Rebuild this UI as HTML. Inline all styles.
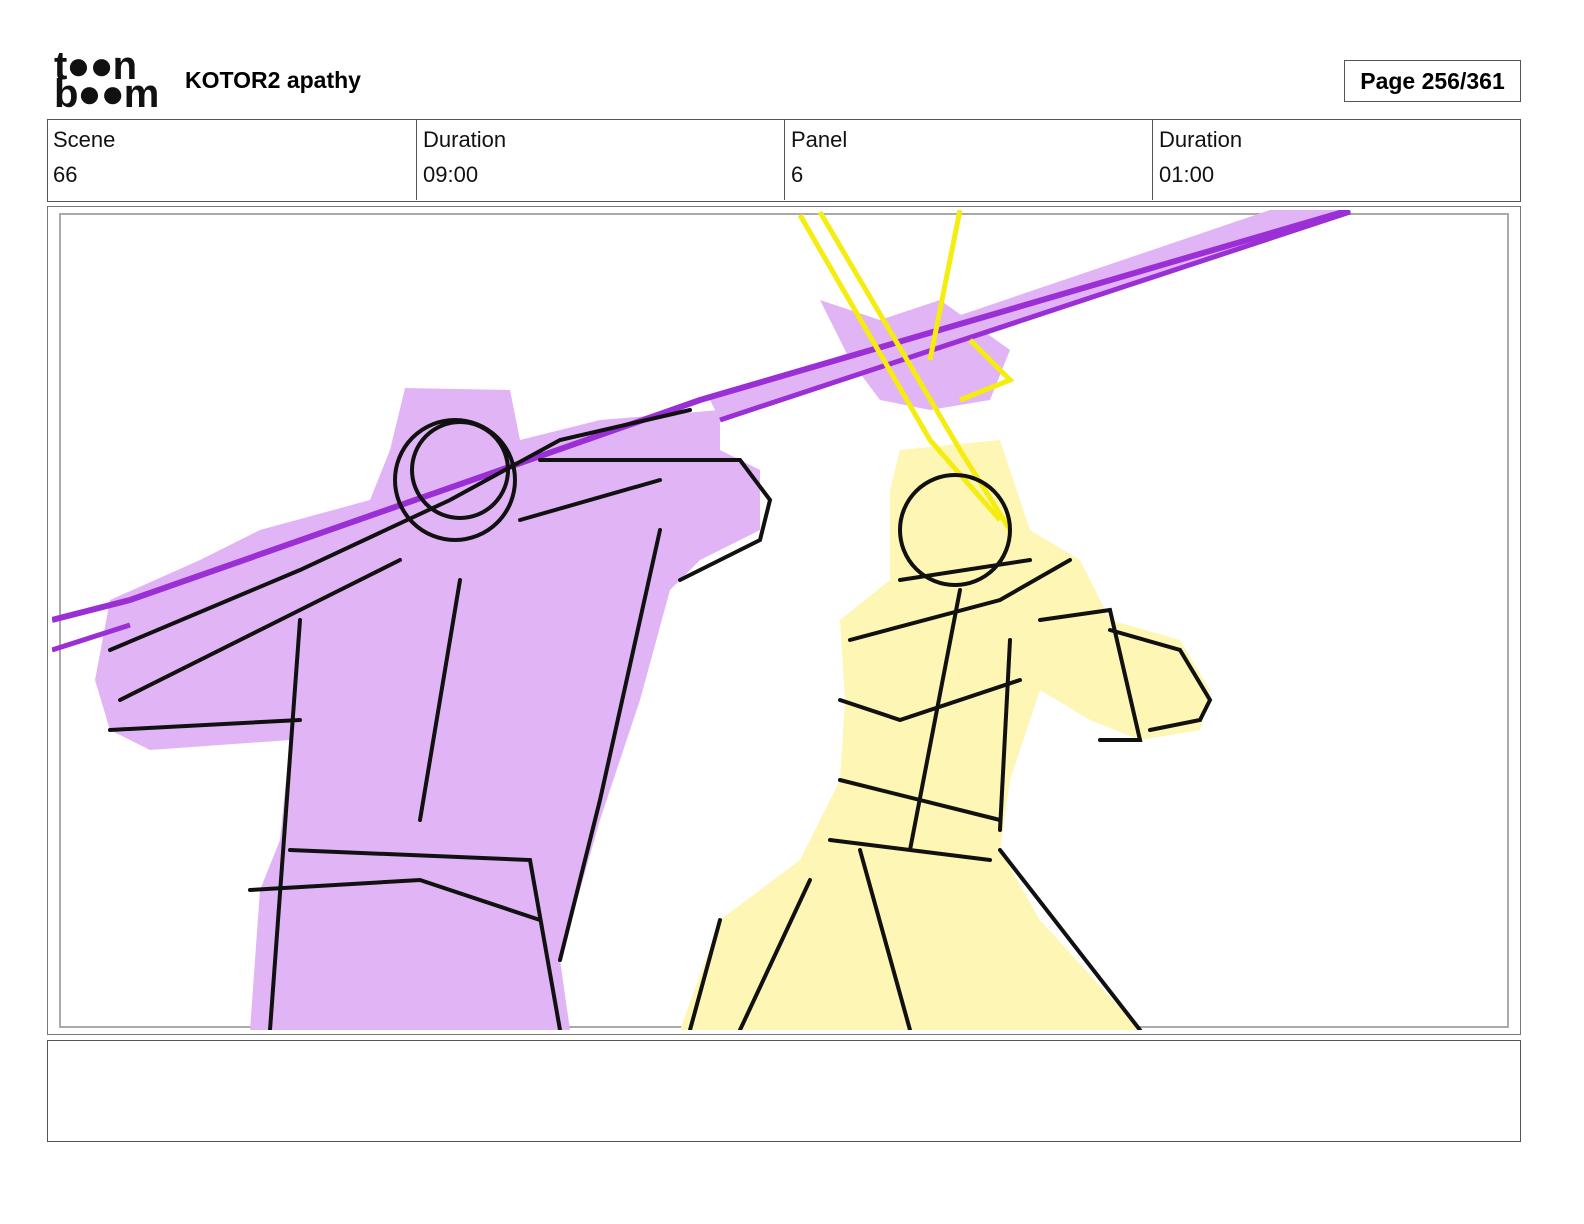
<!DOCTYPE html>
<html><head><meta charset="utf-8"><style>
body{margin:0;width:1584px;height:1224px;background:#fff;font-family:"Liberation Sans",sans-serif;position:relative;overflow:hidden}
.abs{position:absolute}
.logo{font-weight:900;font-size:40px;line-height:28px;letter-spacing:-1px;color:#111}
.cell{position:absolute;top:120px;height:80px;border-left:1px solid #555;font-size:22px;color:#111}
.cell div{position:absolute;left:6px}
</style></head><body>
<div class="abs logo" style="left:54px;top:52px">t●●n<br>b●●m</div>
<div class="abs" style="left:185px;top:67px;font-size:23px;font-weight:bold">KOTOR2 apathy</div>
<div class="abs" style="left:1344px;top:60px;width:175px;height:40px;border:1px solid #555;font-size:23px;font-weight:bold;text-align:center;line-height:40px">Page 256/361</div>
<div class="abs" style="left:47px;top:119px;width:1472px;height:81px;border:1px solid #555"></div>
<div class="cell" style="left:47px;border:none"><div style="top:7px">Scene</div><div style="top:42px">66</div></div>
<div class="cell" style="left:416px"><div style="top:7px">Duration</div><div style="top:42px">09:00</div></div>
<div class="cell" style="left:784px"><div style="top:7px">Panel</div><div style="top:42px">6</div></div>
<div class="cell" style="left:1152px"><div style="top:7px">Duration</div><div style="top:42px">01:00</div></div>
<div class="abs" style="left:47px;top:206px;width:1472px;height:827px;border:1px solid #777"></div>
<svg class="abs" style="left:0;top:0" width="1584" height="1224">
<defs><clipPath id="c"><rect x="52" y="210" width="1464" height="820"/></clipPath></defs>
<rect x="60" y="214" width="1448" height="813" fill="none" stroke="#aaa" stroke-width="2"/>
<g clip-path="url(#c)">
<path d="M1350 210 L1270 210 L710 400 L720 420 Z" fill="#e1b5f5"/>
<path d="M600 420 L520 440 L510 390 L405 388 L390 450 L370 500 L260 530 L200 560 L110 600 L95 680 L110 730 L150 750 L290 740 L280 840 L260 890 L250 1030 L570 1030 L560 960 L600 820 L640 700 L670 590 L700 560 L760 530 L760 470 L720 450 L720 410 Z" fill="#e1b5f5"/>
<path d="M820 300 L880 320 L940 300 L1010 350 L990 400 L930 410 L880 400 L850 360 Z" fill="#e1b5f5"/>
<path d="M52 620 L130 600 L700 400 L1350 210" stroke="#9b2fd6" stroke-width="6" fill="none"/>
<path d="M52 650 L130 625 M720 420 L1350 212" stroke="#9b2fd6" stroke-width="5" fill="none"/>
<path d="M900 450 L1000 440 L1030 530 L1080 560 L1110 620 L1180 640 L1210 690 L1200 730 L1140 740 L1090 720 L1040 690 L1010 780 L1000 850 L1040 920 L1140 1030 L680 1030 L720 920 L800 860 L840 780 L845 700 L840 620 L890 580 L890 490 Z" fill="#fdf6b4"/>
<path d="M800 215 L930 440 L1000 520 M820 212 L960 450 L1010 530 M960 210 L930 360 M970 340 L1010 380 L960 400" stroke="#f5ec10" stroke-width="5" fill="none"/>
<g stroke="#111" stroke-width="4" fill="none" stroke-linecap="round">
<circle cx="455" cy="480" r="60"/><circle cx="460" cy="470" r="48"/>
<path d="M110 650 L300 570 L450 500 L560 440 L690 410 M120 700 L300 610 L400 560 M110 730 L300 720 M290 850 L530 860 L560 1030 M250 890 L420 880 L540 920 M300 620 L270 1030 M660 530 L600 800 L560 960 M460 580 L420 820"/>
<path d="M540 460 L740 460 L770 500 L760 540 L680 580 M520 520 L660 480"/>
<circle cx="955" cy="530" r="55"/>
<path d="M900 580 L1030 560 M850 640 L1000 600 L1070 560 M840 700 L900 720 L1020 680 M840 780 L1000 820 M830 840 L990 860 M720 920 L690 1030 M810 880 L740 1030 M860 850 L910 1030 M1000 850 L1140 1030 M1040 620 L1110 610 L1140 740 L1100 740 M1110 630 L1180 650 L1210 700 L1200 720 L1150 730 M960 590 L910 850 M1010 640 L1000 830"/>
</g>
</g>
</svg>
<div class="abs" style="left:47px;top:1040px;width:1472px;height:100px;border:1px solid #555"></div>
</body></html>
